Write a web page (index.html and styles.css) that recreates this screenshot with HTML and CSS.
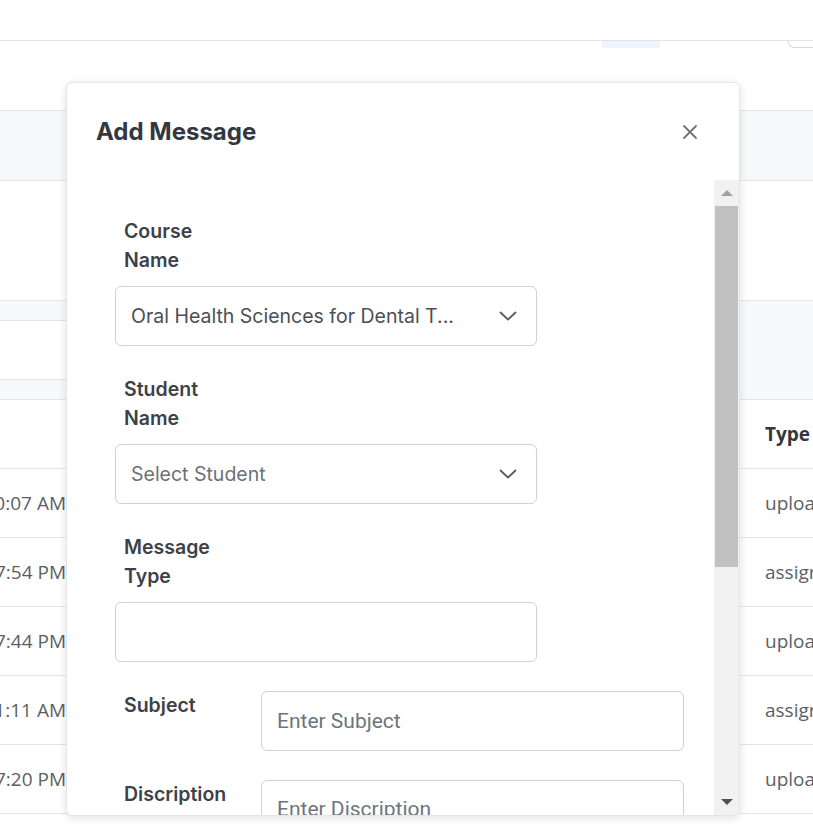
FILE: index.html
```html
<!DOCTYPE html>
<html lang="en">
<head>
    <meta charset="UTF-8">
    <meta name="viewport" content="width=device-width, initial-scale=1.0">
    <title>Messages - Add Message</title>
    <link rel="stylesheet" href="styles.css">
</head>
<body>
    <div class="page">
        <header class="topbar"></header>
        <div class="toolbar">
            <span class="tab-mark"></span>
            <span class="btn-edge"></span>
        </div>
        <div class="section-head"></div>
        <div class="section-body"></div>
        <div class="filter-bar">
            <div class="filter-input"></div>
        </div>

        <div class="table">
            <div class="row head">
                <div class="cell time"></div>
                <div class="cell gap"></div>
                <div class="cell type">Type</div>
            </div>
            <div class="row">
                <div class="cell time"><span>5/10/2024, 10:07 AM</span></div>
                <div class="cell gap"></div>
                <div class="cell type">upload</div>
            </div>
            <div class="row">
                <div class="cell time"><span>5/09/2024, 4:47:54 PM</span></div>
                <div class="cell gap"></div>
                <div class="cell type">assignment</div>
            </div>
            <div class="row">
                <div class="cell time"><span>5/09/2024, 3:17:44 PM</span></div>
                <div class="cell gap"></div>
                <div class="cell type">upload</div>
            </div>
            <div class="row">
                <div class="cell time"><span>5/08/2024, 11:21:11 AM</span></div>
                <div class="cell gap"></div>
                <div class="cell type">assignment</div>
            </div>
            <div class="row">
                <div class="cell time"><span>5/07/2024, 2:37:20 PM</span></div>
                <div class="cell gap"></div>
                <div class="cell type">upload</div>
            </div>
        </div>
    </div>

    <div class="modal">
        <div class="modal-header">
            <h2>Add Message</h2>
            <button class="close" type="button" aria-label="Close">
                <svg width="16" height="16" viewBox="0 0 16 16">
                    <path d="M2 2 L14 14 M14 2 L2 14" stroke="#6c757d" stroke-width="1.8" fill="none" stroke-linecap="round"/>
                </svg>
            </button>
        </div>
        <div class="modal-body">
            <form class="form">
                <div class="field">
                    <label>Course Name</label>
                    <div class="select">
                        <span>Oral Health Sciences for Dental T...</span>
                        <svg width="18" height="10" viewBox="0 0 18 10">
                            <polyline points="1.5,1.5 9,8.5 16.5,1.5" stroke="#555b61" stroke-width="1.8" fill="none" stroke-linecap="round" stroke-linejoin="round"/>
                        </svg>
                    </div>
                </div>

                <div class="field">
                    <label>Student Name</label>
                    <div class="select muted">
                        <span>Select Student</span>
                        <svg width="18" height="10" viewBox="0 0 18 10">
                            <polyline points="1.5,1.5 9,8.5 16.5,1.5" stroke="#555b61" stroke-width="1.8" fill="none" stroke-linecap="round" stroke-linejoin="round"/>
                        </svg>
                    </div>
                </div>

                <div class="field">
                    <label>Message Type</label>
                    <input type="text" class="text-input">
                </div>

                <div class="field inline">
                    <label>Subject</label>
                    <input type="text" class="text-input wide" placeholder="Enter Subject">
                </div>

                <div class="field inline">
                    <label>Discription</label>
                    <textarea class="text-input wide area" placeholder="Enter Discription"></textarea>
                </div>
            </form>

            <div class="scrollbar">
                <div class="sb-btn"><span class="arrow-up"></span></div>
                <div class="sb-track"><div class="sb-thumb"></div></div>
                <div class="sb-btn"><span class="arrow-down"></span></div>
            </div>
        </div>
    </div>
</body>
</html>
```

FILE: styles.css
```css
* {
    box-sizing: border-box;
}
body {
    margin: 0;
    height: 838px;
    overflow: hidden;
    position: relative;
    background: #fff;
    font-family: "Open Sans", Lato, sans-serif;
    color: #5a5f66;
}
.page {
    width: 813px;
    overflow: hidden;
}
.topbar {
    height: 41px;
    border-bottom: 1px solid #e2e3e5;
}
.toolbar {
    height: 7px;
    display: flex;
    gap: 128px;
    padding-left: 602px;
}
.tab-mark {
    flex: none;
    width: 58px;
    background: #eef4fd;
}
.btn-edge {
    flex: none;
    width: 40px;
    border: 1px solid #d6d8db;
    border-top: none;
    border-bottom-left-radius: 6px;
}
.section-head {
    margin-top: 62px;
    height: 71px;
    background: #f8f9fb;
    border-top: 1px solid #e3e5e8;
    border-bottom: 1px solid #e3e5e8;
}
.section-body {
    height: 119px;
}
.filter-bar {
    height: 100px;
    padding-top: 19px;
    background: #f8f9fb;
    border-top: 1px solid #e3e5e8;
    border-bottom: 1px solid #e3e5e8;
}
.filter-input {
    width: 80px;
    height: 60px;
    background: #fff;
    border-top: 1px solid #e3e5e8;
    border-bottom: 1px solid #e3e5e8;
}
.row {
    display: grid;
    grid-template-columns: 66px 699px 200px;
    height: 69px;
    border-bottom: 1px solid #e5e6e8;
    font-size: 19px;
}
.cell {
    display: flex;
    align-items: center;
    white-space: nowrap;
    overflow: hidden;
}
.cell.time {
    justify-content: flex-end;
}
.row.head .type {
    font-weight: 700;
    color: #33373c;
}

/* modal */
.modal {
    position: absolute;
    left: 66px;
    top: 82px;
    width: 674px;
    height: 734px;
    background: #fff;
    border: 1px solid #e4e5e7;
    border-radius: 6px;
    box-shadow: 0 2px 10px rgba(0, 0, 0, 0.12);
    display: flex;
    flex-direction: column;
    overflow: hidden;
    font-family: Inter, "Noto Sans", sans-serif;
}
.modal-header {
    flex: none;
    height: 97px;
    display: flex;
    align-items: center;
    justify-content: space-between;
    padding: 0 41px 0 29px;
}
.modal-header h2 {
    margin: 0;
    font-size: 24px;
    font-weight: 700;
    color: #33383e;
}
.close {
    border: none;
    background: none;
    padding: 0;
    display: flex;
}
.modal-body {
    flex: 1;
    min-height: 0;
    display: flex;
}
.form {
    flex: 1;
    overflow: hidden;
    padding: 37px 0 0 48px;
}
.field {
    margin-bottom: 29px;
}
.field label {
    display: block;
    width: 120px;
    padding-left: 9px;
    margin-bottom: 11px;
    font-size: 19.5px;
    font-weight: 600;
    line-height: 29px;
    color: #3d4248;
}
.select {
    width: 422px;
    height: 60px;
    display: flex;
    align-items: center;
    padding: 0 19px 0 15px;
    border: 1px solid #cfd1d4;
    border-radius: 6px;
    font-size: 19.5px;
    color: #4a4f55;
}
.select span {
    flex: 1;
}
.select.muted {
    color: #6c7177;
}
.text-input {
    display: block;
    width: 422px;
    height: 60px;
    padding: 0 15px;
    border: 1px solid #cfd1d4;
    border-radius: 6px;
    font-family: Roboto, sans-serif;
    font-size: 21px;
    color: #4a4f55;
}
.text-input::placeholder {
    color: #6c757d;
}
.field.inline {
    display: flex;
    align-items: flex-start;
}
.field.inline label {
    width: 146px;
    margin: 0;
}
.text-input.wide {
    width: 423px;
}
.text-input.area {
    height: 90px;
    padding-top: 16px;
    resize: none;
}

/* scrollbar */
.scrollbar {
    flex: none;
    width: 25px;
    background: #f1f1f1;
    display: flex;
    flex-direction: column;
}
.sb-btn {
    height: 26px;
    display: flex;
    align-items: center;
    justify-content: center;
}
.arrow-up {
    border-left: 6px solid transparent;
    border-right: 6px solid transparent;
    border-bottom: 6px solid #a3a3a3;
}
.arrow-down {
    border-left: 6px solid transparent;
    border-right: 6px solid transparent;
    border-top: 6px solid #505050;
}
.sb-track {
    flex: 1;
    padding: 0 1px;
}
.sb-thumb {
    height: 361px;
    background: #c1c1c1;
}
```
